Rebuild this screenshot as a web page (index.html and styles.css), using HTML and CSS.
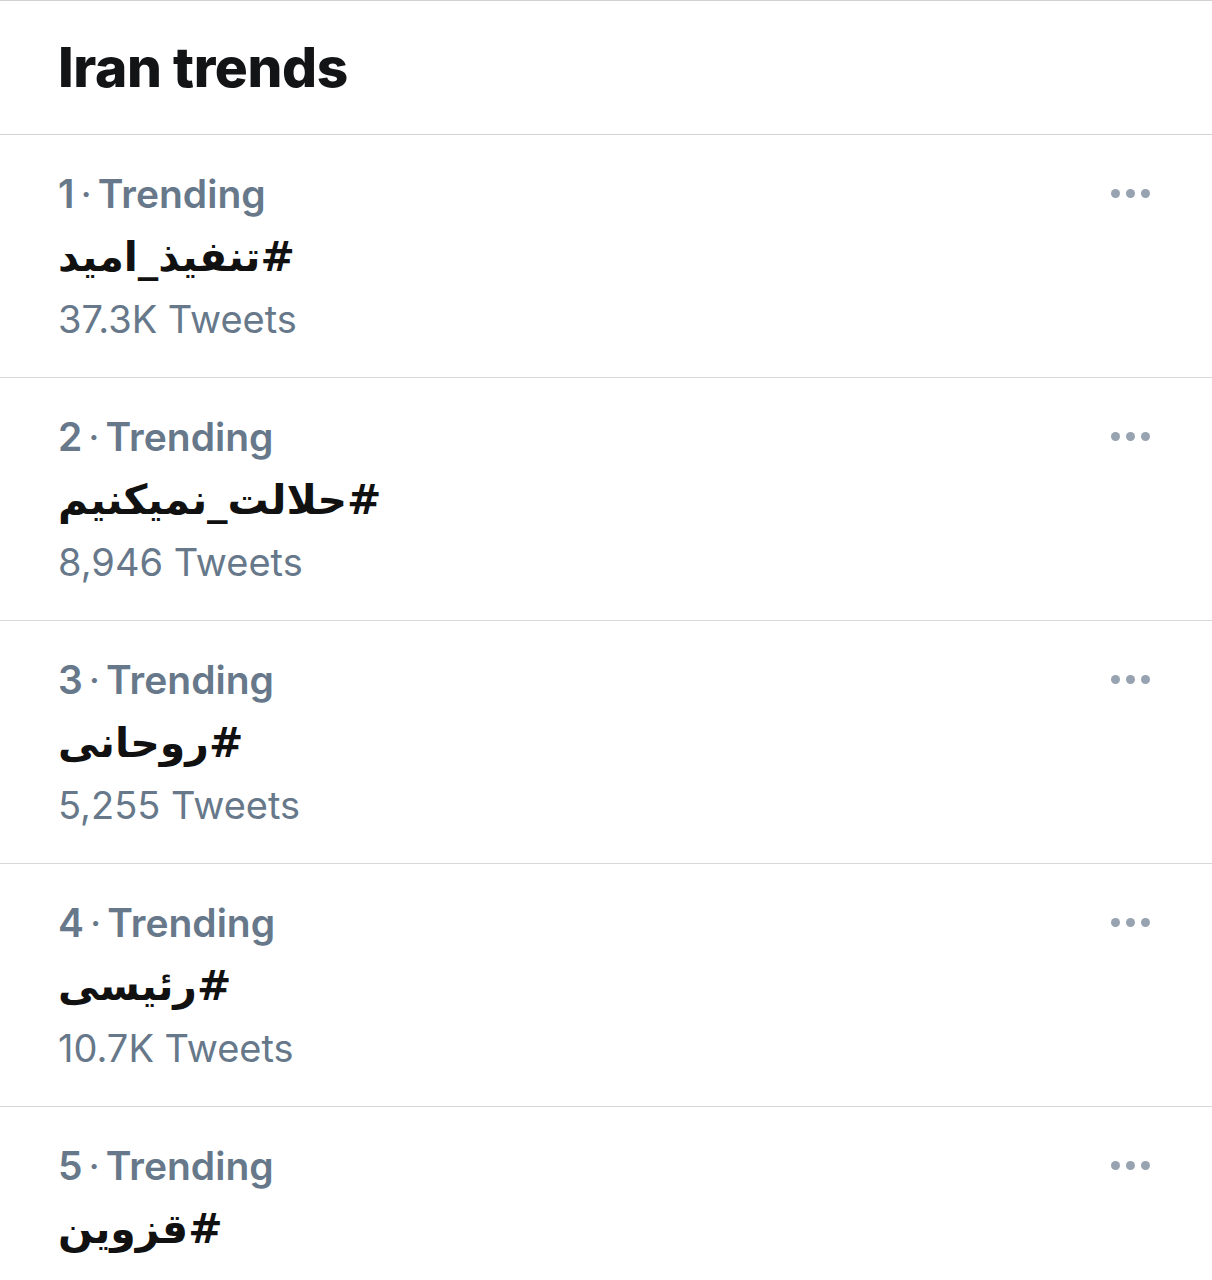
FILE: index.html
```html
<!DOCTYPE html>
<html lang="en">
<head>
    <meta charset="UTF-8">
    <meta name="viewport" content="width=device-width, initial-scale=1.0">
    <title>Iran trends</title>
    <link rel="stylesheet" href="styles.css">
</head>
<body>
    <div class="trends">
        <!-- Header -->
        <div class="trends-header">Iran trends</div>

        <!-- Trend rows -->
        <div class="trend">
            <div class="trend-body">
                <div class="trend-meta">1<span class="sep">·</span>Trending</div>
                <div class="trend-tag" dir="rtl">#تنفیذ_امید</div>
                <div class="trend-count">37.3K Tweets</div>
            </div>
            <div class="trend-more"><span></span><span></span><span></span></div>
        </div>

        <div class="trend">
            <div class="trend-body">
                <div class="trend-meta">2<span class="sep">·</span>Trending</div>
                <div class="trend-tag" dir="rtl">#حلالت_نمیکنیم</div>
                <div class="trend-count">8,946 Tweets</div>
            </div>
            <div class="trend-more"><span></span><span></span><span></span></div>
        </div>

        <div class="trend">
            <div class="trend-body">
                <div class="trend-meta">3<span class="sep">·</span>Trending</div>
                <div class="trend-tag" dir="rtl">#روحانی</div>
                <div class="trend-count">5,255 Tweets</div>
            </div>
            <div class="trend-more"><span></span><span></span><span></span></div>
        </div>

        <div class="trend">
            <div class="trend-body">
                <div class="trend-meta">4<span class="sep">·</span>Trending</div>
                <div class="trend-tag" dir="rtl">#رئیسی</div>
                <div class="trend-count">10.7K Tweets</div>
            </div>
            <div class="trend-more"><span></span><span></span><span></span></div>
        </div>

        <div class="trend trend-last">
            <div class="trend-body">
                <div class="trend-meta">5<span class="sep">·</span>Trending</div>
                <div class="trend-tag" dir="rtl">#قزوین</div>
            </div>
            <div class="trend-more"><span></span><span></span><span></span></div>
        </div>
    </div>
</body>
</html>
```

FILE: styles.css
```css
* {
    margin: 0;
    padding: 0;
    box-sizing: border-box;
}

body {
    font-family: Inter, "Noto Sans", sans-serif;
    background: #ffffff;
    color: #14171a;
    width: 1212px;
    height: 1280px;
    overflow: hidden;
}

.trends {
    display: flex;
    flex-direction: column;
    border-top: 1px solid #d2d2d6;
}

.trends-header {
    height: 134px;
    padding: 30px 0 0 58px;
    font-size: 55px;
    font-weight: 800;
    letter-spacing: -0.4px;
    line-height: 72px;
    color: #121416;
    border-bottom: 1px solid #d2d2d6;
}

.trend {
    height: 243px;
    display: flex;
    justify-content: space-between;
    align-items: flex-start;
    padding: 36px 62px 0 58px;
    border-bottom: 1px solid #d8d8dc;
}

.trend-last {
    height: 173px;
    border-bottom: none;
}

.trend-body {
    display: flex;
    flex-direction: column;
    align-items: flex-start;
}

.trend-meta {
    font-size: 39px;
    font-weight: 600;
    line-height: 46px;
    color: #66788a;
}

.trend-meta .sep {
    margin: 0 6px;
    font-weight: 400;
}

.trend-tag {
    font-family: "DejaVu Sans", sans-serif;
    font-size: 41px;
    font-weight: 700;
    line-height: 80px;
    color: #111111;
}

.trend-count {
    font-size: 38px;
    font-weight: 400;
    line-height: 44px;
    color: #66788a;
}

.trend-more {
    display: flex;
    gap: 6px;
    padding-top: 18px;
}

.trend-more span {
    width: 9px;
    height: 9px;
    border-radius: 50%;
    background: #97a3b0;
}
```
